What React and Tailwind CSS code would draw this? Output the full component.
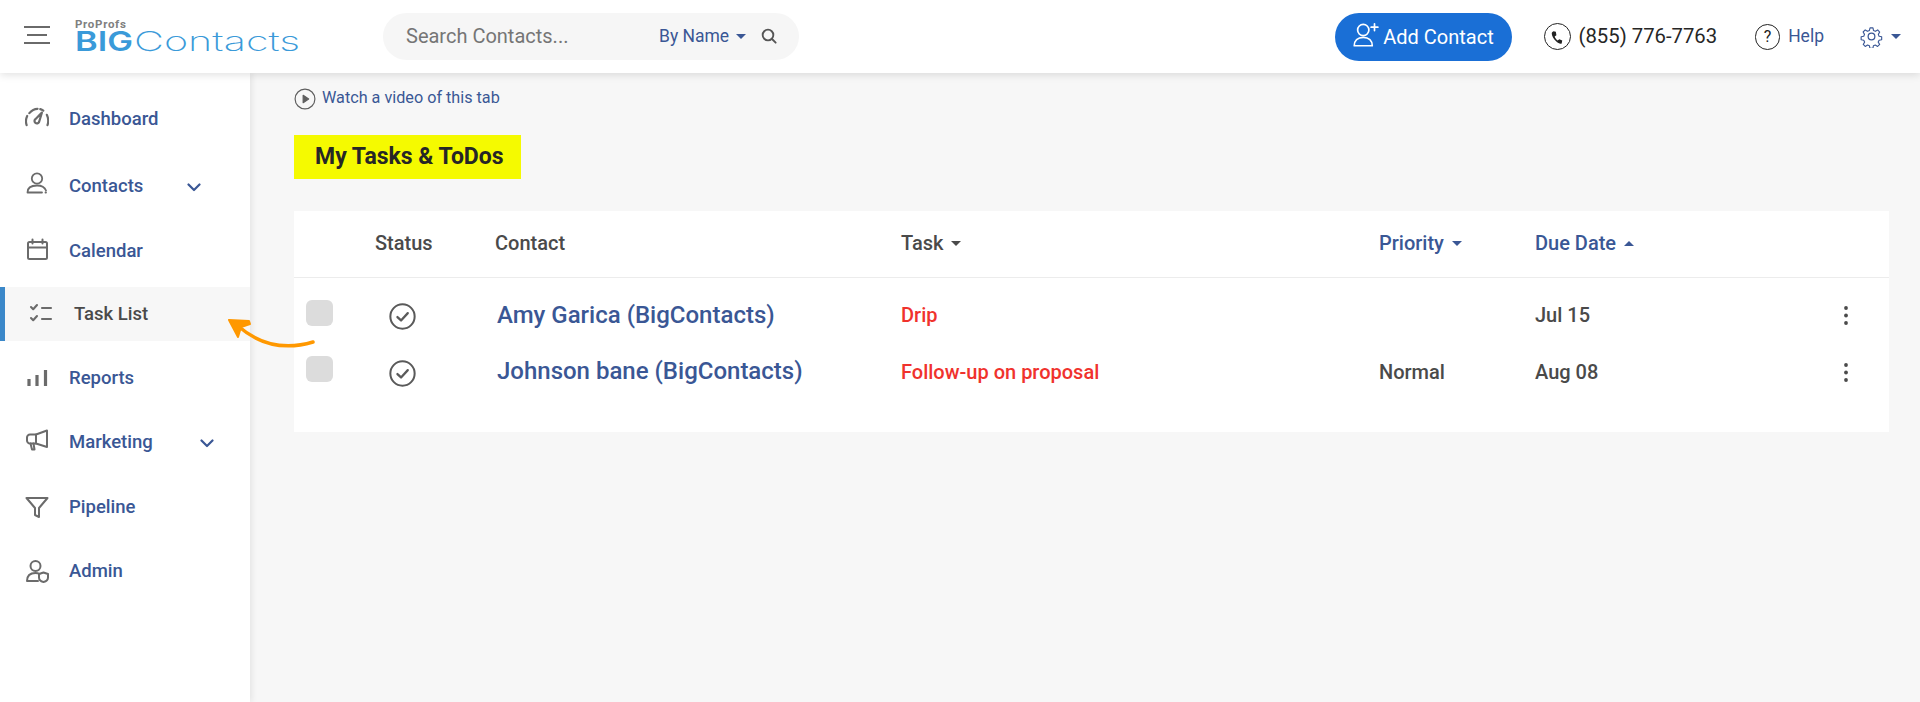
const Ico = ({ w = 24, h = 24, vb = "0 0 24 24", sw = 1.8, c = "#6b6b6b", cls = "", children }) => (
  <svg width={w} height={h} viewBox={vb} fill="none" stroke={c} strokeWidth={sw} strokeLinecap="round" strokeLinejoin="round" className={cls}>{children}</svg>
);
const Caret = ({ up, c = "#3a5795" }) => (
  <svg width="10" height="5" viewBox="0 0 10 5" fill={c}><path d={up ? "M0 5 5 0l5 5z" : "M0 0h10L5 5z"} /></svg>
);
const Chevron = () => (
  <svg width="14" height="9" viewBox="0 0 14 9" fill="none" stroke="#3a5795" strokeWidth="2.2" strokeLinecap="round" strokeLinejoin="round"><path d="M1.5 1.5 7 7l5.5-5.5" /></svg>
);
const icons = {
  gauge: <Ico w={24} h={20} vb="1 2 22 18" sw={2}><path d="M2.500 18.500C1.500 15.500 1.800 12.500 3 10M5 7.500C7 5 9.500 3.500 12.500 3.500M15 3.800c1 .3 2 .8 2.800 1.400M21 9c1.500 3 1.600 6.500.6 9.500" /><path d="M16.500 7 10.500 13a2.200 2.200 0 1 0 3.400 2.600z" /></Ico>,
  user: <Ico><circle cx="12" cy="7.500" r="5.200" /><path d="M2.500 21.500c0-4.500 3.600-7 9.500-7 4 0 7.600 1.400 9 5M2.500 21.500H17M20.500 21.500h.5" /></Ico>,
  calendar: <Ico sw={2}><rect x="3" y="5" width="19" height="17" rx="1.500" /><path d="M3 10.500h19M7.500 2.500v4M17.500 2.500v4" /></Ico>,
  tasks: <Ico sw={2.100}><path d="M2 5l2.200 2.200L8 3M2 16l2.200 2.200L8 14M13 6h9M13 17h9" /></Ico>,
  bars: <Ico sw={3.200}><path d="M4 20v-7M12 20V9M20.500 20V4" strokeLinecap="butt" /></Ico>,
  mega: <Ico sw={2}><path d="M22 2.500v16.500L11 15.500H5a3 3 0 0 1-3-3v-3a3 3 0 0 1 3-3h6z" /><path d="M11 6.500v9M5.500 15.500l1.500 6h2.500l-1-6" /></Ico>,
  funnel: <Ico sw={2}><path d="M1.500 3h21l-8.500 10v9l-4-2v-7z" /></Ico>,
  admin: <Ico sw={2}><circle cx="10.500" cy="7" r="5" /><path d="M2 22c0-5 3-8 8.500-8 1.500 0 3 .3 4 .8M2 22h11" /><path d="M18.500 13.500l4.500 1.500v3.500c0 2.500-2 4-4.500 4.500-2.500-.5-4.500-2-4.500-4.500V15z" /></Ico>,
};
const nav = [
  { t: "Dashboard", i: "gauge", cls: "h-[54px] mt-[-3px]", iy: "mt-[-5px]" },
  { t: "Contacts", i: "user", cls: "h-[54px] mt-[13px]", chev: "ml-[44px]", iy: "mt-[-6px]" },
  { t: "Calendar", i: "calendar", cls: "h-[54px] mt-[11px]", iy: "mt-[-4px]" },
  { t: "Task List", i: "tasks", active: true, cls: "h-[54px] mt-[9px]" },
  { t: "Reports", i: "bars", cls: "h-[54px] mt-[10px]" },
  { t: "Marketing", i: "mega", cls: "h-[54px] mt-[10px]", chev: "ml-[47px]", iy: "mt-[-4px]" },
  { t: "Pipeline", i: "funnel", cls: "h-[54px] mt-[11px]" },
  { t: "Admin", i: "admin", cls: "h-[54px] mt-[10px]" },
];
const CheckCircle = () => (
  <Ico w={27} h={27} sw={1.800} c="#5a5a5a"><circle cx="12" cy="12" r="10.800" /><path d="M7.500 12.500l3.200 3 6-6.500" strokeWidth="2" /></Ico>
);
const Dots = () => (
  <svg width="4" height="19" viewBox="0 0 4 19" fill="#4a4a4a" className="mt-[2px]"><circle cx="2" cy="2" r="1.900" /><circle cx="2" cy="9.500" r="1.900" /><circle cx="2" cy="17" r="1.900" /></svg>
);
const cols = "grid grid-cols-[81px_120px_406px_478px_156px_1fr] items-center";
const rows = [
  { n: "Amy Garica (BigContacts)", t: "Drip", p: "", d: "Jul 15", cb: "mt-[-3px]", ci: "mt-[3px]", dt: "" },
  { n: "Johnson bane (BigContacts)", t: "Follow-up on proposal", p: "Normal", d: "Aug 08", cb: "mt-[-5px]", ci: "mt-[3px]", dt: "mt-[-1px]" },
];
export default function App() {
  return (
    <div className="h-[702px] w-full overflow-hidden bg-[#f7f7f7] flex flex-col relative" style={{ fontFamily: "Roboto, sans-serif" }}>
      <header className="h-[73px] shrink-0 bg-white flex items-center relative z-20 shadow-[0_2px_8px_rgba(0,0,0,0.12)]">
        <div className="ml-[24px] flex flex-col gap-[6px] w-[26px] mt-[-4px]">
          <span className="h-[2px] bg-[#6a6a6a] w-full" />
          <span className="h-[2px] bg-[#6a6a6a] w-[20px] ml-[3px]" />
          <span className="h-[2px] bg-[#6a6a6a] w-full" />
        </div>
        <div className="ml-[25px] w-[233px] h-[44px] relative shrink-0">
          <div className="text-[11.500px] leading-[12px] font-bold text-[#808080] tracking-[0.7px] pt-[3px]">ProProfs</div>
          <svg width="233" height="34" viewBox="0 0 233 34" className="absolute left-0 top-[9px]">
            <text x="0" y="27" fontFamily="Inter, sans-serif" fontWeight="600" fontSize="27" fill="#3a9ad9" textLength="58" lengthAdjust="spacingAndGlyphs">BIG</text>
            <text x="59" y="27" fontFamily="Inter, sans-serif" fontWeight="200" fontSize="27" fill="#3a9ad9" textLength="166" lengthAdjust="spacingAndGlyphs">Contacts</text>
          </svg>
        </div>
        <div className="ml-[75px] w-[416px] h-[47px] mt-[-1px] rounded-full bg-[#f6f6f6] flex items-center shrink-0">
          <span className="ml-[23px] text-[20px] text-[#757575] w-[253px]">Search Contacts...</span>
          <span className="text-[17.500px] text-[#3a5795]">By Name</span>
          <span className="ml-[7px]"><Caret /></span>
          <span className="ml-[15px] flex"><Ico w={16} h={16} sw={2.800} c="#555"><circle cx="10.500" cy="10.500" r="8" /><path d="M16.500 16.500 22 22" /></Ico></span>
        </div>
        <div className="ml-auto flex items-center mr-[19px]">
          <div className="h-[48px] w-[177px] rounded-full bg-[#1a6fd6] text-white flex items-center justify-center gap-[4px] text-[20px]">
            <Ico w={27} h={27} sw={1.500} c="#fff" cls="mt-[-4px]"><circle cx="10" cy="8" r="5" /><path d="M2 22c0-4.500 3-7.500 8-7.500s8 3 8 7.500zM20 2.500v6M17 5.500h6" /></Ico>
            <span>Add Contact</span>
          </div>
          <div className="ml-[32px] w-[27px] h-[27px] rounded-full border-[1.500px] border-[#222] flex items-center justify-center">
            <svg width="14" height="16" viewBox="0 0 24 24" fill="#222"><path d="M6 2l4 1 1 6-3 2c1 3 3 5.500 5 7l3-2 5 2-1 5c-2 1-6 0-10-4S3 10 3 6c0-2 1-3 3-4z" /></svg>
          </div>
          <span className="ml-[8px] text-[20.300px] text-[#262626]">(855) 776-7763</span>
          <div className="ml-[38px] w-[25px] h-[26px] rounded-full border-[1.500px] border-[#222] flex items-center justify-center text-[16px] text-[#222] leading-none">?</div>
          <span className="ml-[8px] text-[17.500px] text-[#3a5795]">Help</span>
          <span className="ml-[36px] flex"><Ico w={23} h={23} sw={1.300} c="#3a5795"><circle cx="12" cy="12" r="3.500" /><path d="M10.300 2h3.400l.6 3 2.200 1 2.700-1.600 2.300 2.400-1.600 2.700.9 2.200 3 .6v3.400l-3 .6-1 2.200 1.700 2.700-2.400 2.300-2.700-1.600-2.200.9-.6 3h-3.400l-.6-3-2.200-.9-2.700 1.600-2.300-2.300 1.600-2.700-1-2.200-3-.6v-3.400l3-.6.900-2.200-1.600-2.700 2.400-2.400 2.700 1.600 2.200-1z" transform="translate(1.200 1.200) scale(.9)" /></Ico></span>
          <span className="ml-[8px]"><Caret /></span>
        </div>
      </header>
      <div className="flex flex-1 min-h-0">
        <aside className="w-[250px] shrink-0 bg-white shadow-[2px_0_6px_rgba(0,0,0,0.08)] relative z-10 pt-[22px]">
          {nav.map((n) => (
            <div key={n.t} className={`flex items-center ${n.cls} ${n.active ? "bg-[#f7f7f7] border-l-[5px] border-[#3b88c9]" : ""}`}>
              <span className={`flex ${n.active ? "ml-[24px] w-[45px]" : "ml-[25px] w-[44px]"} ${n.iy || ""}`}>{icons[n.i]}</span>
              <span className={`text-[18.500px] font-medium mt-[2px] ${n.active ? "text-[#4a4a4a]" : "text-[#3a5795]"}`}>{n.t}</span>
              {n.chev && <span className={`flex mt-[2px] ${n.chev}`}><Chevron /></span>}
            </div>
          ))}
        </aside>
        <main className="flex-1 min-w-0 pl-[44px] pr-[31px]">
          <div className="flex items-center h-[27px] mt-[11px]">
            <Ico w={22} h={22} sw={1.300} c="#5f5f5f" cls="mt-[3px]"><circle cx="12" cy="12" r="10.800" /><path d="M10 8l6 4-6 4z" fill="#5f5f5f" /></Ico>
            <span className="ml-[6px] mt-[2px] text-[16.200px] text-[#3a5795]">Watch a video of this tab</span>
          </div>
          <h1 className="mt-[24px] h-[44px] w-[227px] bg-[#f5fa00] flex items-center pl-[21px] text-[23px] font-bold text-[#262626]">My Tasks &amp; ToDos</h1>
          <section className="mt-[32px] bg-white h-[221px]">
            <div className={`${cols} h-[67px] border-b border-[#ececec] pb-[2px] text-[20px] font-medium text-[#4a4a4a]`}>
              <span />
              <span>Status</span>
              <span>Contact</span>
              <span className="flex items-center gap-[8px]">Task <Caret c="#4a4a4a" /></span>
              <span className="flex items-center gap-[8px] text-[#3a5795]">Priority <Caret /></span>
              <span className="flex items-center gap-[8px] text-[#3a5795]">Due Date <Caret up /></span>
            </div>
            <div className="pt-[8px]">
              {rows.map((r) => (
                <div key={r.n} className={`${cols} h-[57px] text-[20px] text-[#4a4a4a]`}>
                  <span className={`ml-[12px] w-[27px] h-[26px] rounded-md bg-[#dcdcdc] ${r.cb}`} />
                  <span className={`flex ml-[14px] ${r.ci}`}><CheckCircle /></span>
                  <span className={`ml-[2px] text-[24px] font-medium text-[#3a5795] ${r.dt}`}>{r.n}</span>
                  <span className="font-medium text-[#f0322d]">{r.t}</span>
                  <span className="font-medium">{r.p}</span>
                  <span className="flex items-center justify-between pr-[41px] font-medium">{r.d}<Dots /></span>
                </div>
              ))}
            </div>
          </section>
        </main>
      </div>
      <svg width="90" height="40" viewBox="0 0 90 40" fill="none" className="absolute left-[226px] top-[316px] z-30">
        <path d="M87 26C60 34 35 30 12 10" stroke="#ff9800" strokeWidth="3.500" strokeLinecap="round" />
        <path d="M3 4 23 5 24 8 15 11 12 21z" fill="#ff9800" stroke="#ff9800" strokeWidth="2" strokeLinejoin="round" />
      </svg>
    </div>
  );
}
